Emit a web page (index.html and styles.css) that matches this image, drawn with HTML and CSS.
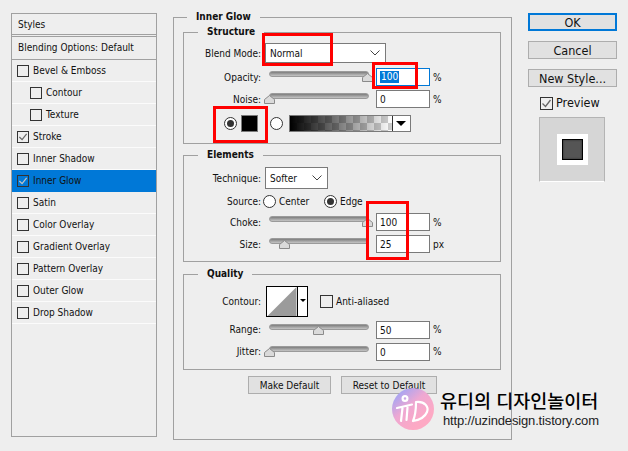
FILE: index.html
```html
<!DOCTYPE html>
<html lang="ko">
<head>
<meta charset="utf-8">
<title>Layer Style</title>
<link rel="stylesheet" href="styles.css">
</head>
<body>
<div class="dialog">
  <aside class="styles">
    <div class="styles-head">Styles</div>
    <div class="styles-blend">Blending Options: Default</div>
    <ul class="fx">
      <li><span class="cb"></span>Bevel &amp; Emboss</li>
      <li class="sub"><span class="cb"></span>Contour</li>
      <li class="sub"><span class="cb"></span>Texture</li>
      <li><span class="cb"><svg viewBox="0 0 11 11"><path d="M1.5 5.5 4.5 8.5 9.5 2" /></svg></span>Stroke</li>
      <li><span class="cb"></span>Inner Shadow</li>
      <li class="on"><span class="cb"><svg viewBox="0 0 11 11"><path d="M1.5 5.5 4.5 8.5 9.5 2" /></svg></span>Inner Glow</li>
      <li><span class="cb"></span>Satin</li>
      <li><span class="cb"></span>Color Overlay</li>
      <li><span class="cb"></span>Gradient Overlay</li>
      <li><span class="cb"></span>Pattern Overlay</li>
      <li><span class="cb"></span>Outer Glow</li>
      <li><span class="cb"></span>Drop Shadow</li>
    </ul>
  </aside>

  <main class="outer">
    <h2 class="title title-outer">Inner Glow</h2>

    <section class="group group-structure">
      <h3 class="title title-structure">Structure</h3>
      <div class="row row-select">
        <label class="lab">Blend Mode:</label>
        <div class="select select-blend"><span>Normal</span><svg class="chev" viewBox="0 0 10 6"><path d="M.5 .5 5 5 9.5 .5"/></svg></div>
      </div>
      <div class="row row-opacity">
        <label class="lab">Opacity:</label>
        <div class="slider"><svg class="thumb" style="left:98px" viewBox="0 0 11 9"><path d="M.5 8.5V4.5L5.5 .5l5 4v4z"/></svg></div>
        <div class="num num-active"><span class="sel">100</span></div><span class="unit">%</span>
      </div>
      <div class="row row-noise">
        <label class="lab">Noise:</label>
        <div class="slider"><svg class="thumb" style="left:0" viewBox="0 0 11 9"><path d="M.5 8.5V4.5L5.5 .5l5 4v4z"/></svg></div>
        <div class="num">0</div><span class="unit">%</span>
      </div>
      <div class="row row-color">
        <span class="radio radio-on radio-solid"></span>
        <span class="swatch"></span>
        <span class="radio radio-grad"></span>
        <div class="gradient"><span class="grad-fill"></span><span class="grad-btn"></span></div>
      </div>
    </section>

    <section class="group group-elements">
      <h3 class="title title-elements">Elements</h3>
      <div class="row row-tech">
        <label class="lab">Technique:</label>
        <div class="select select-tech"><span>Softer</span><svg class="chev" viewBox="0 0 10 6"><path d="M.5 .5 5 5 9.5 .5"/></svg></div>
      </div>
      <div class="row row-source">
        <label class="lab">Source:</label>
        <span class="radio radio-center"></span><span class="opt opt-center">Center</span>
        <span class="radio radio-on radio-edge"></span><span class="opt">Edge</span>
      </div>
      <div class="row row-choke">
        <label class="lab">Choke:</label>
        <div class="slider"><svg class="thumb" style="left:98px" viewBox="0 0 11 9"><path d="M.5 8.5V4.5L5.5 .5l5 4v4z"/></svg></div>
        <div class="num">100</div><span class="unit">%</span>
      </div>
      <div class="row row-size">
        <label class="lab">Size:</label>
        <div class="slider"><svg class="thumb" style="left:15px" viewBox="0 0 11 9"><path d="M.5 8.5V4.5L5.5 .5l5 4v4z"/></svg></div>
        <div class="num">25</div><span class="unit">px</span>
      </div>
    </section>

    <section class="group group-quality">
      <h3 class="title title-quality">Quality</h3>
      <div class="row row-contour">
        <label class="lab">Contour:</label>
        <div class="contour">
          <svg class="contour-art" viewBox="0 0 30 30"><rect width="30" height="30" fill="#fff"/><path d="M0 30 30 0V30z" fill="#9b9b9b"/></svg>
          <span class="contour-btn"></span>
        </div>
        <span class="cb cb-anti"></span><span class="opt">Anti-aliased</span>
      </div>
      <div class="row row-range">
        <label class="lab">Range:</label>
        <div class="slider"><svg class="thumb" style="left:49px" viewBox="0 0 11 9"><path d="M.5 8.5V4.5L5.5 .5l5 4v4z"/></svg></div>
        <div class="num">50</div><span class="unit">%</span>
      </div>
      <div class="row row-jitter">
        <label class="lab">Jitter:</label>
        <div class="slider"><svg class="thumb" style="left:0" viewBox="0 0 11 9"><path d="M.5 8.5V4.5L5.5 .5l5 4v4z"/></svg></div>
        <div class="num">0</div><span class="unit">%</span>
      </div>
    </section>

    <div class="defaults">
      <button class="btn btn-make">Make Default</button>
      <button class="btn btn-reset">Reset to Default</button>
    </div>
  </main>

  <div class="actions">
    <button class="btn btn-ok">OK</button>
    <button class="btn">Cancel</button>
    <button class="btn">New Style...</button>
    <div class="preview-check"><span class="cb"><svg viewBox="0 0 11 11"><path d="M1.5 5.5 4.5 8.5 9.5 2" /></svg></span>Preview</div>
    <div class="preview-box"><div class="preview-white"><div class="preview-dark"></div></div></div>
  </div>
</div>

<div class="mark mark-blend"></div>
<div class="mark mark-opacity"></div>
<div class="mark mark-color"></div>
<div class="mark mark-choke"></div>

<div class="logo">
  <svg viewBox="0 0 42 42">
    <defs><linearGradient id="lg" x1="0.1" y1="0.1" x2="0.7" y2="0.8"><stop offset="0" stop-color="#9fa4f6"/><stop offset=".5" stop-color="#eea8d2"/><stop offset="1" stop-color="#fda9c4"/></linearGradient></defs>
    <circle cx="21" cy="21" r="21" fill="url(#lg)"/>
    <g fill="none" stroke="#fff" stroke-width="2.2" stroke-linecap="round">
      <circle cx="13" cy="10.5" r="2.4"/>
      <path d="M5 20 20 16.5M10.5 20 9 33M15.5 19.5 14.5 32"/>
      <path d="M24 14.5C24 22 23.5 27 21 33M24 14C33 13 37 19 35 24 33 29 27 32 21 33"/>
    </g>
  </svg>
</div>
<div class="brand">
  <div class="brand-name">유디의 디자인놀이터</div>
  <div class="brand-url">http://uzindesign.tistory.com</div>
</div>
</body>
</html>
```
FILE: styles.css
```css
* { box-sizing: border-box; }
html, body { margin: 0; height: 100%; }
body {
  background: #eeeeee;
  color: #111;
  font: 10px/1 "DejaVu Sans Condensed", "Liberation Sans", sans-serif;
  overflow: hidden;
  position: relative;
}
.dialog { display: flex; align-items: flex-start; padding: 13px 0 0 11px; }

/* left list */
.styles { width: 146px; height: 424px; border: 1px solid #a0a0a0; }
.styles-head { height: 21px; line-height: 21px; padding-left: 6px; border-bottom: 1px solid #a0a0a0; }
.styles-blend { height: 24px; margin-top: 1px; padding-left: 6px; line-height: 22px; border-top: 1px solid #a0a0a0; border-bottom: 1px solid #a0a0a0; }
.fx { list-style: none; margin: 0; padding: 0; }
.fx li { display: flex; align-items: center; height: 22px; padding-left: 5px; border-bottom: 1px solid #fbfbfb; }
.fx li.sub { padding-left: 18px; }
.fx li.on { background: #0078d7; border-bottom-color: #0078d7; }
.fx .cb { margin-right: 4px; }
.cb { display: inline-block; flex: none; width: 12px; height: 12px; border: 1px solid #333; }
.cb svg { display: block; width: 10px; height: 10px; }
.cb path { fill: none; stroke: #666; stroke-width: 1.3; }
.fx li.on .cb path { stroke: #c4c4c4; }

/* central panel */
.outer { position: relative; width: 339px; height: 423px; margin: 4px 0 0 16px; padding: 14px 0 0 9px; border: 1px solid #a0a0a0; }
.title { position: absolute; margin: 0; padding: 0 9px; background: #eeeeee; font-size: 10px; font-weight: 700; line-height: 14px; }
.title-outer { top: -8px; left: 13px; }
.group { position: relative; width: 318px; border: 1px solid #a0a0a0; margin-bottom: 11px; }
.group-structure { height: 112px; padding-top: 10px; }
.group-elements { height: 107px; padding-top: 11px; margin-bottom: 12px; }
.group-quality { height: 96px; padding-top: 11px; margin-bottom: 6px; }
.title-structure, .title-elements, .title-quality { top: -8px; left: 14px; }

.row { display: flex; align-items: center; }
.lab { width: 77px; flex: none; text-align: right; }
.group-structure .lab, .group-elements .lab, .group-structure .unit, .group-elements .unit, .group-elements .opt, .select > span { padding-top: 2px; }
.row-select { height: 20px; margin-bottom: 5px; }
.row-opacity { height: 18px; margin-bottom: 4px; }
.row-noise { height: 18px; margin-bottom: 7px; }
.row-color { height: 17px; padding-left: 40px; }
.row-tech { height: 22px; margin-bottom: 2px; }
.row-source { height: 20px; margin-bottom: 2px; }
.row-choke { height: 18px; margin-bottom: 4px; }
.row-size { height: 18px; }
.row-contour { height: 31px; margin-bottom: 4px; }
.row-range { height: 18px; margin-bottom: 4px; }
.row-jitter { height: 18px; }

.select { display: flex; align-items: center; justify-content: space-between; height: 100%; margin-left: 4px; padding: 0 5px 0 4px; background: #fff; border: 1px solid #7a7a7a; }
.select-blend { width: 121px; }
.select-tech { width: 63px; }
.chev { width: 10px; height: 6px; }
.chev path { fill: none; stroke: #444; stroke-width: 1; }

.slider { position: relative; flex: none; width: 100px; height: 6px; margin: -7px 0 0 8px; background: linear-gradient(#7d7d7d, #a9a9a9 60%, #c4c4c4); border-radius: 3px; border: 1px solid #9a9a9a; }
.thumb { position: absolute; top: 1px; width: 11px; height: 9px; margin-left: -6px; }
.thumb path { fill: #dadada; stroke: #8a8a8a; }

.num { flex: none; width: 54px; height: 100%; margin-left: 7px; padding-left: 3px; background: #fff; border: 1px solid #7a7a7a; line-height: 17px; }
.num-active { border-color: #0078d7; }
.sel { display: inline-block; padding: 0 1px; background: #0078d7; color: #fff; line-height: 12px; margin-top: 2px; vertical-align: top; }
.unit { margin-left: 3px; }

.radio { display: inline-block; flex: none; position: relative; width: 13px; height: 13px; border: 1px solid #333; border-radius: 50%; background: #fff; }
.radio-on::after { content: ""; position: absolute; inset: 2px; border-radius: 50%; background: #333; }
.swatch { flex: none; width: 17px; height: 17px; margin-left: 4px; background: #000; border: 1px solid #7a7a7a; }
.radio-grad { margin-left: 12px; }
.gradient { display: flex; width: 122px; height: 17px; margin-left: 6px; border: 1px solid #7a7a7a; background: #fff; }
.grad-fill { flex: 1; background: linear-gradient(90deg, #000, rgba(0,0,0,0)), conic-gradient(#cfcfcf 25%, #fff 0 50%, #cfcfcf 0 75%, #fff 0) 0 0 / 14px 14px; border-right: 1px solid #333; }
.grad-btn { position: relative; width: 17px; }
.grad-btn::after { content: ""; position: absolute; left: 3px; top: 5px; border: 5px solid transparent; border-top: 5px solid #000; border-bottom: 0; }

.opt { margin-left: 3px; }
.opt-center { width: 45px; }
.row-source .radio-center { margin-left: 2px; }

.contour { display: flex; width: 42px; height: 31px; margin-left: 5px; border: 1px solid #000; background: #fff; }
.contour-art { width: 30px; height: 29px; }
.contour-btn { position: relative; flex: 1; border-left: 1px solid #000; }
.contour-btn::after { content: ""; position: absolute; left: 2px; top: 12px; border: 3px solid transparent; border-top: 3px solid #000; border-bottom: 0; }
.cb-anti { margin-left: 12px; width: 13px; height: 13px; }

/* buttons */
.btn { display: block; width: 89px; height: 18px; padding: 0; background: #e1e1e1; border: 1px solid #adadad; color: #111; font: inherit; line-height: 15px; }
.defaults { display: flex; padding-left: 65px; }
.btn-make { width: 83px; }
.btn-reset { width: 96px; margin-left: 10px; }
.btn-ok { border: 2px solid #0078d7; line-height: 13px; }

.actions { width: 89px; margin-left: 16px; display: flex; flex-direction: column; gap: 10px; font-size: 12.5px; }
.preview-check { display: flex; align-items: center; margin: 0 0 0 12px; height: 13px; }
.preview-check .cb { width: 13px; height: 13px; margin-right: 3px; }
.preview-check .cb svg { width: 11px; height: 11px; }
.preview-box { display: flex; align-items: center; justify-content: center; width: 66px; height: 65px; margin: -3px 0 0 11px; background: #d6d6d6; border: 1px solid #b4b4b4; border-bottom-color: #fff; }
.preview-white { display: flex; align-items: center; justify-content: center; width: 31px; height: 31px; background: #fff; }
.preview-dark { width: 21px; height: 21px; background: #555; border: 1px solid #000; box-shadow: inset 0 0 2px #222; }

/* red annotations */
.mark { position: absolute; border: 3px solid #ff0000; }
.mark-blend { left: 262px; top: 33px; width: 71px; height: 33px; }
.mark-opacity { left: 372px; top: 62px; width: 46px; height: 27px; }
.mark-color { left: 213px; top: 106px; width: 55px; height: 37px; }
.mark-choke { left: 366px; top: 201px; width: 43px; height: 59px; }

/* watermark */
.logo { position: absolute; left: 392px; top: 388px; width: 42px; height: 42px; }
.logo svg { display: block; width: 100%; height: 100%; }
.brand { position: absolute; left: 440px; top: 388px; width: 165px; color: #000; }
.brand-name { font: 500 18.5px/24px "Noto Sans CJK KR", sans-serif; white-space: nowrap; }
.brand-url { margin: 1px 0 0 3px; font: 13px/15px "Liberation Sans", sans-serif; letter-spacing: -0.15px; color: #222; white-space: nowrap; }
```
